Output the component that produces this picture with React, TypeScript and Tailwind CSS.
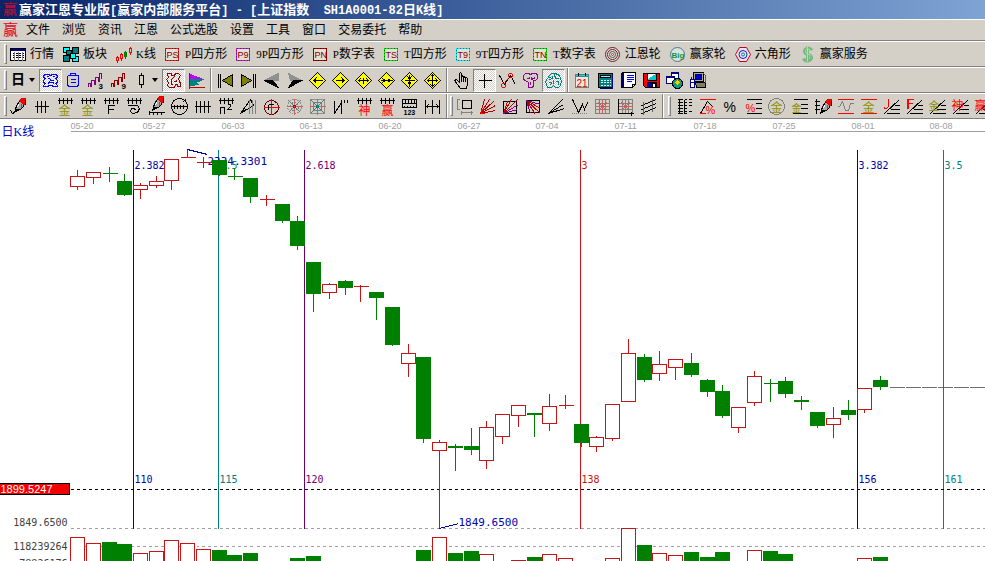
import type { ReactNode } from 'react'
import clsx from 'clsx'

type Tool = { name: string; icon: ReactNode; on?: boolean }

// ---------- small drawing helpers ----------

// integer coordinates land on pixel centres
function Ico({ children, w = 21 }: { children: ReactNode; w?: number }) {
  return (
    <svg width={w} height={20} viewBox={`-0.5 -0.5 ${w} 20`} fill="none" stroke="#000" shapeRendering="crispEdges" aria-hidden="true">
      {children}
    </svg>
  )
}

function Ch({ c, x, y, fill, size = 10, bold = false }: { c: string; x: number; y: number; fill: string; size?: number; bold?: boolean }) {
  return (
    <text x={x} y={y} fill={fill} stroke="none" fontSize={size} fontWeight={bold ? 700 : 400} fontFamily="'Liberation Sans', 'Noto Sans CJK SC', sans-serif">
      {c}
    </text>
  )
}

const Ruler = () => <path d="M3 4H18M5 1V7M9 1V7M13 1V7M17 1V7" />
const Fan = () => <path d="M3 17L18 3M5 17H18M9 13H18M13 9H18" />

const Pen = ({ dx = 0, dy = 0 }: { dx?: number; dy?: number }) => (
  <g transform={`translate(${dx} ${dy})`}>
    <path d="M11 5L8 9L7 13L12 13L15 10L15 6Z" fill="#a8a8a8" />
    <path d="M10 8L9 11" stroke="#fff" />
    <path d="M13 7L13 11" stroke="#606060" />
    <path d="M11 4L13 2H17V8H15Z" fill="#f00" stroke="#e00000" />
    <path d="M17 3V8" />
    <path d="M7 13L6 16L11 13Z" fill="#000" />
  </g>
)

const Diamond = ({ d }: { d: string }) => (
  <Ico>
    <path d="M10 2L18 10L10 18L2 10Z" fill="#ff0" />
    <path d={d} />
  </Ico>
)

const Caret = () => (
  <svg width={7} height={4} viewBox="0 0 7 4" aria-hidden="true"><path d="M0 0H6L3 4Z" /></svg>
)

// ---------- toolbar 1 ----------

const Badge = ({ t, edge, ink = '#800000' }: { t: string; edge: string; ink?: string }) => (
  <Ico w={16}>
    <rect x={0} y={4} width={13} height={12} fill="#e4e0d8" stroke={edge} />
    <rect x={0} y={4} width={13} height={12} stroke="#000" strokeDasharray="1 2" strokeOpacity={0.5} />
    <text x={1} y={13} fill={ink} stroke="none" fontSize={9} fontFamily="'Liberation Sans', sans-serif">{t}</text>
  </Ico>
)

const modules: { latin?: string; text: string; icon: ReactNode }[] = [
  {
    text: '行情',
    icon: (
      <Ico w={16}>
        <rect x={0} y={4} width={15} height={12} fill="#fff" />
        <path d="M0 5H15M0 6H15" stroke="#000080" />
        <path d="M2 9H14M2 11H14M2 13H14" strokeDasharray="2 1" />
        <path d="M4 7V16M8 7V16M12 7V16" stroke="#808080" />
      </Ico>
    ),
  },
  {
    text: '板块',
    icon: (
      <Ico w={16}>
        <rect x={0} y={3} width={6} height={5} fill="#0ff" />
        <rect x={9} y={3} width={6} height={6} fill="#008080" />
        <rect x={0} y={11} width={6} height={6} fill="#008080" />
        <rect x={9} y={12} width={6} height={5} fill="#0ff" />
        <rect x={3} y={6} width={5} height={4} fill="#008080" />
        <rect x={7} y={9} width={5} height={5} fill="#0ff" />
      </Ico>
    ),
  },
  {
    latin: 'K', text: '线',
    icon: (
      <Ico w={16}>
        <path d="M1 11V18M5 8V16M14 2V10" stroke="#f00" />
        <path d="M9 6V14" stroke="#008000" />
        <rect x={0} y={13} width={2} height={3} fill="#d4d0c8" stroke="#f00" />
        <rect x={4} y={10} width={2} height={4} fill="#d4d0c8" stroke="#f00" />
        <rect x={8} y={8} width={2} height={4} fill="#008000" stroke="#008000" />
        <rect x={13} y={4} width={2} height={4} fill="#d4d0c8" stroke="#f00" />
      </Ico>
    ),
  },
  { latin: 'P', text: '四方形', icon: <Badge t="PS" edge="#e02020" /> },
  { latin: '9P', text: '四方形', icon: <Badge t="P9" edge="#c020c0" /> },
  { latin: 'P', text: '数字表', icon: <Badge t="PN" edge="#a00000" /> },
  { latin: 'T', text: '四方形', icon: <Badge t="TS" edge="#00e000" /> },
  { latin: '9T', text: '四方形', icon: <Badge t="T9" edge="#00e8f0" /> },
  { latin: 'T', text: '数字表', icon: <Badge t="TN" edge="#00e000" /> },
  {
    text: '江恩轮',
    icon: (
      <Ico w={16}>
        <g shapeRendering="auto">
          <circle cx={7} cy={10} r={7} fill="#e4e0d8" stroke="#701828" />
          <circle cx={7} cy={10} r={5} stroke="#701828" />
          <circle cx={7} cy={10} r={3} stroke="#306050" />
          <circle cx={7} cy={10} r={1} stroke="#c03030" />
        </g>
      </Ico>
    ),
  },
  {
    text: '赢家轮',
    icon: (
      <Ico w={16}>
        <circle cx={7} cy={10} r={7} stroke="#507890" fill="#d8e4e0" shapeRendering="auto" />
        <text x={1} y={13} fill="#109050" stroke="none" fontSize={8} fontWeight={700} fontFamily="'Liberation Sans', sans-serif">Big</text>
      </Ico>
    ),
  },
  {
    text: '六角形',
    icon: (
      <Ico w={16}>
        <g shapeRendering="auto">
          <path d="M4 3H11L15 10L11 17H4L0 10Z" fill="#e8e4f0" stroke="#c00020" />
          <circle cx={7.5} cy={10} r={4} stroke="#1020c0" />
          <circle cx={7.5} cy={10} r={1.5} stroke="#008080" />
        </g>
      </Ico>
    ),
  },
  {
    text: '赢家服务',
    icon: (
      <Ico w={16}>
        <g shapeRendering="auto">
          <path d="M11 6C10 3 4 3 4 7C4 11 11 9 11 13C11 17 4 17 3 14M7 2V18" stroke="#78b880" strokeWidth={3} />
          <path d="M10 6C9 4 5 4 5 7C5 10 10 9 10 12M7 2V17" stroke="#a8e8a8" strokeWidth={1} />
        </g>
      </Ico>
    ),
  },
]

// ---------- toolbar 2 ----------

const shapes: Tool[] = [
  {
    name: '云图', on: true,
    icon: (
      <Ico>
        <path d="M3 5L5 4H8L10 5L12 4H15L17 5V7L15 8L17 10V12L15 13L17 15V16H13L11 15H9L7 16H3V15L5 13L3 12V10L5 8L3 7Z" stroke="#00f" />
        <path d="M6 6H8M12 6H14M7 8H9L11 10H13M7 12H8L10 10M12 12L14 13M7 14L9 12H11" stroke="#00f" />
      </Ico>
    ),
  },
  {
    name: '剪贴板',
    icon: (
      <Ico>
        <path d="M5 5H15V15L13 16H6L4 15V6Z" stroke="#00f" />
        <path d="M7 5V3H12V5M7 9H12M7 12H12" stroke="#00f" />
      </Ico>
    ),
  },
  {
    name: '波段3',
    icon: (
      <Ico>
        <path d="M2 16V13H4V16H5M5 16V10H8V14H9V7H12V11H13V3H15V8" stroke="#800080" />
        <Ch c="3" x={12} y={18} fill="#000" size={8} bold />
      </Ico>
    ),
  },
  {
    name: '波段9',
    icon: (
      <Ico>
        <path d="M2 16V13H4V16H5M5 16V10H8V14H9V7H12V11H13V3H15V8" stroke="#900000" />
        <Ch c="9" x={12} y={18} fill="#000" size={8} bold />
      </Ico>
    ),
  },
]

const figures: Tool[] = [
  {
    name: '图形', on: true,
    icon: (
      <Ico>
        <path d="M4 3H8V5H11L12 3H15L17 5L15 8L16 11L17 13V16H14V14H12L11 17H6L4 15L5 12L3 9L5 7Z" stroke="#900000" />
        <path d="M8 13V9L10 7M10 11H13V9M7 14H9" stroke="#900000" />
        <path d="M10 5L12 7" stroke="#f00" />
      </Ico>
    ),
  },
  {
    name: '筹码',
    icon: (
      <Ico>
        <path d="M4 4L17 9H4Z" fill="#c000ff" stroke="#c000ff" />
        <path d="M4 9H17L9 12L12 14L4 15Z" fill="#008080" stroke="#008080" />
        <path d="M3 2V18M3 17H18" stroke="#c00000" />
      </Ico>
    ),
  },
]

const moves: Tool[] = [
  { name: '最前', icon: <Ico><path d="M3 3V17M5 3V17" /><path d="M17 4V16L7 10Z" fill="#808000" /></Ico> },
  { name: '最后', icon: <Ico><path d="M17 3V17M15 3V17" /><path d="M3 4V16L13 10Z" fill="#808000" /></Ico> },
  { name: '后退', icon: <Ico><path d="M3 10L17 3V10Z" fill="#909090" stroke="#909090" /><path d="M3 10H11L17 17L13 15Z" fill="#000" /></Ico> },
  { name: '前进', icon: <Ico><path d="M17 10L4 3L6 10Z" fill="#909090" stroke="#909090" /><path d="M17 10H9L4 17L8 15Z" fill="#000" /></Ico> },
  { name: '左移', icon: <Diamond d="M6 10H15M9 7L6 10L9 13M8 8V12" /> },
  { name: '右移', icon: <Diamond d="M5 10H14M11 7L14 10L11 13M12 8V12" /> },
  { name: '横向拉伸', icon: <Diamond d="M5 10H15M7 8L5 10L7 12M13 8L15 10L13 12M10 7V13" /> },
  { name: '横向压缩', icon: <Diamond d="M4 10H16M6 8L9 10L6 12M14 8L11 10L14 12" /> },
  { name: '纵向压缩', icon: <Diamond d="M10 4V16M8 6L10 9L12 6M8 14L10 11L12 14M5 10H15" /> },
  { name: '纵向拉伸', icon: <Diamond d="M10 4V16M8 6L10 4L12 6M8 14L10 16L12 14M5 10H15M7 8L5 10L7 12M13 8L15 10L13 12" /> },
]

const pointers: Tool[] = [
  {
    name: '手形',
    icon: <Ico><path d="M8 12L5 9L3 10L6 14L9 18H15L16 14V8L15 7L14 8V11M14 8L13 6L12 7V11M12 7L11 5L10 6V11M10 6V3L9 2L8 3V12" /></Ico>,
  },
  { name: '十字光标', on: true, icon: <Ico><path d="M10 3V17M4 10H17" /></Ico> },
  {
    name: '连线',
    icon: <Ico><path d="M2 5L7 14L13 5L18 14" /><circle cx={6} cy={15} r={2} stroke="#f00" /><circle cx={13} cy={5} r={2} stroke="#f00" /><path d="M7 12L12 7" stroke="#800000" /></Ico>,
  },
  {
    name: '树形',
    icon: <Ico><path d="M5 3H8L10 4L12 3H16L17 5V8L15 10H13V15L12 17H8V12L5 10L3 9V5Z" stroke="#900090" /><path d="M6 8H9V6M11 6V9L15 7M10 11V14" stroke="#900090" /></Ico>,
  },
  {
    name: '智能', on: true,
    icon: <Ico><path d="M6 5L8 3H12L14 4L16 5L17 8L18 11L17 15L15 17H12L10 15L8 17H4L3 14L2 11L4 8Z" stroke="#008080" /><path d="M9 5V8L6 9M11 4L12 8H15M5 12H8L7 15M10 9V13M12 11H15V14M5 7H7" stroke="#008080" /></Ico>,
  },
]

const utils: Tool[] = [
  {
    name: '日历',
    icon: <Ico><rect x={3} y={4} width={13} height={13} fill="#f0e8e0" stroke="#708080" /><path d="M3 4H16V6H3Z" fill="#40c0c0" stroke="#309090" /><path d="M6 2V5M13 2V5" /><Ch c="21" x={4} y={16} fill="#e00000" size={10} /></Ico>,
  },
  {
    name: '计算器',
    icon: <Ico><rect x={3} y={3} width={14} height={14} fill="#008080" /><rect x={5} y={5} width={10} height={2} fill="#b0e8e8" /><path d="M5 10H15M5 12H15M5 15H15" stroke="#e0ffff" strokeDasharray="2 1" strokeWidth={1} /><path d="M17 4V18H4" stroke="#000080" /></Ico>,
  },
  {
    name: '记事本',
    icon: <Ico><path d="M4 2H17V14L14 17H4Z" fill="#fff" /><path d="M4 2V17" stroke="#000060" strokeWidth={3} /><path d="M8 5H15M8 7H15M8 9H15M8 11H13" stroke="#00f" /><path d="M17 14H14V17" /></Ico>,
  },
  {
    name: '保存',
    icon: <Ico><path d="M2 3H18V17H4L2 15Z" fill="#f00" /><rect x={6} y={3} width={9} height={7} fill="#fff" /><path d="M7 9L14 4V9Z" fill="#0cc" stroke="#0cc" /><rect x={6} y={12} width={9} height={5} fill="#0000c0" /><rect x={11} y={13} width={3} height={4} fill="#fff" /></Ico>,
  },
  {
    name: '网络',
    icon: <Ico><rect x={7} y={2} width={7} height={7} fill="#fff" stroke="#000080" /><path d="M7 3H14" stroke="#000080" /><rect x={2} y={6} width={8} height={7} fill="#fff" stroke="#000080" /><path d="M2 7H10" stroke="#000080" /><circle cx={13} cy={13} r={5} fill="#00a0a0" /><path d="M10 12L13 9L16 12L13 15Z" fill="#e0e000" stroke="#808000" /></Ico>,
  },
  {
    name: '远程',
    icon: <Ico><rect x={6} y={2} width={10} height={9} fill="#b0ac98" /><rect x={8} y={4} width={6} height={5} fill="#0000c0" stroke="#000080" /><path d="M8 12H18V17H9Z" fill="#808060" /><path d="M16 3L18 5V12" stroke="#606040" /><rect x={3} y={9} width={4} height={8} fill="#fff" stroke="#000080" /><path d="M4 6V9M3 12H7" stroke="#0000c0" /></Ico>,
  },
]

// ---------- toolbar 3 ----------

const lines: Tool[] = [
  { name: '画笔', icon: <Ico><Pen /><path d="M2 14L4 17L6 16" /></Ico> },
  { name: '等分线', icon: <Ico><path d="M3 10H17M6 4V16M10 4V16M14 4V16" /></Ico> },
  { name: '黄金分割', icon: <Ico><Ruler /><Ch c="金" x={4} y={18} fill="#909000" size={12} /></Ico> },
  { name: '黄金周期', icon: <Ico><Ruler /><Ch c="金" x={4} y={18} fill="#909000" size={12} /></Ico> },
  { name: '斐波那契', icon: <Ico><Ruler /><path d="M8 17V9H14M8 13H13" /></Ico> },
  { name: '螺旋', icon: <Ico><Ruler /><path d="M4 9H14L16 12L14 16L9 17L7 15L8 12H11L12 14" /></Ico> },
  { name: '标尺笔', icon: <Ico><Pen dy={-2} /><path d="M2 16H18M3 14V18M7 15V18M11 15V18M15 15V18" /></Ico> },
  { name: '圆周', icon: <Ico><circle cx={10} cy={10} r={8} /><path d="M2 10H18M5 8V12M8 8V12M11 8V12M14 8V12M13 6L16 3" /></Ico> },
  { name: '周期线', icon: <Ico><path d="M2 10H18M4 4V16M8 4V16M12 4V16M16 4V16" /></Ico> },
  { name: '平方', icon: <Ico><Ruler /><path d="M5 17V10M5 11H9V17M12 9L13 8H15V10L12 13H16" /></Ico> },
  { name: '三角', icon: <Ico><path d="M2 17L12 3L15 9L2 17L8 12" /><path d="M11 3V17M14 3V17M17 3V17" stroke="#808080" /></Ico> },
  { name: '定位圆', icon: <Ico><circle cx={10} cy={11} r={7} stroke="#600000" /><path d="M10 2V18M2 11H18" stroke="#f00" /><path d="M7 8H12M7 8V13" /></Ico> },
  { name: '射线圆', icon: <Ico><circle cx={10} cy={10} r={7} stroke="#909090" strokeDasharray="2 1" /><circle cx={10} cy={10} r={4} stroke="#509090" strokeDasharray="2 1" /><path d="M10 2V18M2 10H18" stroke="#d06060" /><path d="M4 4L16 16M16 4L4 16" stroke="#608080" /><path d="M9 9H11V11H9Z" stroke="#c00" /></Ico> },
  { name: '射线方', icon: <Ico><rect x={3} y={3} width={14} height={14} stroke="#909090" /><rect x={6} y={6} width={8} height={8} stroke="#509090" /><path d="M10 2V18M2 10H18" stroke="#d06060" /><path d="M3 3L17 17M17 3L3 17" stroke="#707070" /><path d="M9 9H11V11H9Z" stroke="#008080" /></Ico> },
  { name: '波浪', icon: <Ico><path d="M4 4V17L11 6V17M11 6V3M14 3V6M17 3V6" /></Ico> },
  { name: '神奇数', icon: <Ico><Ruler /><Ch c="神" x={5} y={18} fill="#f00" size={12} /></Ico> },
  { name: '赢家数', icon: <Ico><Ruler /><Ch c="赢" x={5} y={18} fill="#f00" size={12} /></Ico> },
  { name: '刻度', icon: <Ico><path d="M3 3H17V11H3ZM3 7H17M6 3V7M9 3V7M12 3V7M15 3V7M5 9V11M8 9V11M11 9V11M14 9V11" /><Ch c="123" x={4} y={18} fill="#000" size={7} bold /></Ico> },
  { name: '区间', icon: <Ico><path d="M3 3V17M17 3V17M10 3V17M3 10H17M6 8L4 10L6 12M14 8L16 10L14 12" /></Ico> },
]

const fans: Tool[] = [
  { name: '矩形', icon: <Ico><rect x={8} y={4} width={9} height={8} /><path d="M3 3V13M2 3H5M2 13H5M7 16H18M7 14V18M17 14V18" stroke="#808080" /></Ico> },
  { name: '角度线', icon: <Ico><path d="M3 17L7 3M3 17L12 3M3 17L17 4M3 17L18 9M3 17L18 14" stroke="#b00000" /><path d="M3 17L5 13M3 17H7" stroke="#f00" /></Ico> },
  { name: '角度框', icon: <Ico><rect x={3} y={5} width={13} height={12} /><path d="M3 17L7 5M3 17L11 3M3 17L17 3" stroke="#c00000" /><path d="M3 17L18 8M3 17L17 13" stroke="#800080" /></Ico> },
  { name: '反角度框', icon: <Ico><rect x={3} y={4} width={13} height={12} /><path d="M3 4L17 17M3 4L17 12M3 4L12 18" stroke="#c00000" /><path d="M3 4L17 8M3 4L7 17" stroke="#800080" /></Ico> },
  { name: '速阻线', icon: <Ico><path d="M2 17L16 3M2 17L17 8M2 17L18 12M2 17L6 15" /></Ico> },
  { name: '折线', icon: <Ico><path d="M3 3L9 16L13 8L15 13L18 6" /><path d="M2 17H18" stroke="#808080" strokeDasharray="1 1" /></Ico> },
  { name: '网格', icon: <Ico><path d="M3 3H17V17H3ZM3 7H17M3 13H17M7 3V17M13 3V17" stroke="#808080" /><path d="M10 3V17M3 10H17M6 6L14 14M14 6L6 14" stroke="#d06060" /></Ico> },
  { name: '坐标网格', icon: <Ico><path d="M3 3H17V17M7 3V17M13 3V17M3 7H17M3 13H17" stroke="#808080" /><path d="M10 3V17M3 10H17M6 6L14 14M14 6L6 14" stroke="#d06060" /><path d="M3 2V17H18M16 15V19" /></Ico> },
  { name: '平行线', icon: <Ico><path d="M3 9L18 3M3 13L18 7M3 17L18 11" /><path d="M5 5V18M14 2V15" stroke="#606060" /></Ico> },
]

const levels: Tool[] = [
  { name: '阶梯', icon: <Ico><path d="M5 3V17M10 3V17M3 3H8M3 6H8M3 9H8M3 12H8M3 15H8M3 17H8M10 3H12M10 6H12M10 9H12M10 12H12M10 15H12M10 17H12M14 3H17M14 6H17M14 9H17M14 15H17" /></Ico> },
  { name: '百分比', icon: <Ico><path d="M3 17L10 5L16 11" /><path d="M2 3H18M2 17H8" stroke="#f00" /><Ch c="%" x={8} y={17} fill="#f00" size={11} /></Ico> },
  { name: '百分号', icon: <Ico><Ch c="%" x={3} y={15} fill="#000" size={14} /></Ico> },
  { name: '百分线', icon: <Ico><path d="M3 3H18M12 7H18M12 12H18M3 17H18" /><Ch c="%" x={2} y={15} fill="#f00" size={11} /></Ico> },
  { name: '金圈', icon: <Ico><circle cx={10} cy={10} r={8} stroke="#808080" /><Ch c="金" x={4} y={15} fill="#909000" size={12} /></Ico> },
  { name: '金线', icon: <Ico><path d="M4 3H18M11 8H18M11 12H18M3 17H18" /><Ch c="金" x={2} y={15} fill="#909000" size={10} /></Ico> },
  { name: '标注笔', icon: <Ico><Pen dx={2} dy={1} /><path d="M4 2V17M2 5H7M2 9H7M2 13H7" /></Ico> },
  { name: '通道波', icon: <Ico><path d="M2 10H4L7 5L10 14L13 14L15 7L18 7" stroke="#808080" /><path d="M2 3H18M2 17H18" stroke="#f00" /></Ico> },
  { name: '金通道', icon: <Ico><Ch c="金" x={4} y={15} fill="#909000" size={12} /><path d="M2 3H18M2 17H18" stroke="#f00" /></Ico> },
  { name: 'J线', icon: <Ico><Fan /><path d="M7 2V10L5 12H3V10" stroke="#f00" /></Ico> },
  { name: 'F线', icon: <Ico><Fan /><path d="M3 12V3H9M3 7H8M4 12V3" stroke="#f00" /></Ico> },
  { name: '金角', icon: <Ico><Fan /><Ch c="金" x={1} y={13} fill="#909000" size={11} /></Ico> },
  { name: '神角', icon: <Ico><Fan /><Ch c="神" x={1} y={13} fill="#f00" size={12} /></Ico> },
  { name: '赢角', icon: <Ico><Fan /><Ch c="赢" x={1} y={13} fill="#f00" size={12} /></Ico> },
]

// ---------- chrome ----------

const DITHER = 'bg-[repeating-conic-gradient(#fff_0_25%,#d4d0c8_0_50%)] bg-[length:2px_2px]'

function Btn({ tool }: { tool: Tool }) {
  return (
    <button
      type="button"
      title={tool.name}
      aria-label={tool.name}
      className={clsx(
        'flex h-[23px] w-[23px] shrink-0 items-center justify-center border',
        tool.on ? `border-[#808080] border-r-white border-b-white ${DITHER}` : 'border-transparent',
      )}
    >
      {tool.icon}
    </button>
  )
}

const Group = ({ tools }: { tools: Tool[] }) => <>{tools.map(t => <Btn key={t.name} tool={t} />)}</>

const Grip = () => <span className="h-5 w-[3px] shrink-0 border border-t-white border-r-[#808080] border-b-[#808080] border-l-white" />
const Split = () => <span className="mx-[2px] h-full w-[2px] shrink-0 border-l border-[#808080] bg-white" />

const bar = 'flex h-[26px] shrink-0 items-center overflow-hidden border-t border-b border-t-white border-b-[#808080] pl-1'

const menus = ['文件', '浏览', '资讯', '江恩', '公式选股', '设置', '工具', '窗口', '交易委托', '帮助']

// ---------- chart ----------

const TOP = 119
const RED = '#c81414'
const GREEN = '#008000'
const BLUE = '#0000b0'

// [rising, high, body top, body bottom, low, volume top]
const candles: [boolean, number, number, number, number, number][] = [
  [true, 169, 176, 186, 189, 537],
  [true, 172, 172, 177, 183, 543],
  [false, 166, 173, 173, 181, 542],
  [false, 173, 181, 194, 195, 544],
  [true, 182, 185, 189, 198, 553],
  [true, 175, 181, 185, 187, 551],
  [true, 159, 159, 180, 189, 540],
  [true, 149, 157, 157, 157, 543],
  [true, 156, 162, 162, 167, 549],
  [false, 160, 160, 174, 175, 550],
  [false, 167, 176, 176, 179, 555],
  [false, 178, 178, 196, 202, 553],
  [true, 194, 199, 199, 205, 570],
  [false, 203, 204, 220, 222, 570],
  [false, 215, 221, 245, 249, 558],
  [false, 262, 262, 293, 311, 556],
  [true, 282, 284, 292, 298, 570],
  [false, 279, 281, 287, 294, 570],
  [true, 284, 286, 286, 301, 570],
  [false, 292, 292, 297, 319, 570],
  [false, 307, 307, 344, 345, 570],
  [true, 343, 353, 363, 376, 570],
  [false, 357, 357, 438, 442, 550],
  [true, 439, 442, 450, 528, 537],
  [false, 443, 446, 447, 470, 553],
  [false, 427, 446, 449, 454, 551],
  [true, 420, 427, 460, 468, 554],
  [true, 414, 414, 436, 443, 570],
  [true, 404, 405, 415, 426, 560],
  [false, 413, 413, 414, 436, 557],
  [true, 393, 406, 423, 430, 554],
  [true, 394, 405, 405, 408, 558],
  [false, 424, 424, 442, 446, 570],
  [true, 435, 437, 446, 451, 570],
  [true, 403, 404, 438, 440, 558],
  [true, 338, 353, 401, 401, 528],
  [false, 353, 357, 379, 381, 545],
  [true, 350, 364, 373, 380, 553],
  [true, 359, 359, 367, 379, 555],
  [false, 352, 363, 374, 376, 552],
  [false, 378, 380, 391, 396, 557],
  [false, 384, 391, 415, 417, 552],
  [true, 406, 407, 427, 432, 570],
  [true, 370, 376, 402, 405, 550],
  [false, 378, 383, 383, 401, 551],
  [false, 376, 381, 393, 397, 554],
  [false, 395, 400, 401, 409, 570],
  [false, 412, 412, 425, 427, 570],
  [true, 406, 418, 424, 437, 570],
  [false, 399, 410, 414, 419, 570],
  [true, 387, 388, 409, 412, 558],
  [false, 375, 380, 386, 389, 557],
]

const cycles = [
  { x: 133, color: BLUE, top: '2.382', bottom: '110' },
  { x: 218, color: '#008080', top: '2.5', bottom: '115' },
  { x: 304, color: '#700070', top: '2.618', bottom: '120' },
  { x: 580, color: '#c81414', top: '3', bottom: '138' },
  { x: 857, color: BLUE, top: '3.382', bottom: '156' },
  { x: 943, color: '#008080', top: '3.5', bottom: '161' },
]

const dates: [number, string][] = [
  [70, '05-20'], [142, '05-27'], [221, '06-03'], [299, '06-13'], [378, '06-20'], [457, '06-27'],
  [535, '07-04'], [614, '07-11'], [693, '07-18'], [772, '07-25'], [851, '08-01'], [929, '08-08'],
]

const slot = (i: number) => Math.floor(70.55 + 15.74 * i)

function Candle({ i }: { i: number }) {
  const [up, high, top, bottom, low, vol] = candles[i]
  const x = slot(i)
  const color = up ? RED : GREEN
  const fill = up ? '#fff' : GREEN
  return (
    <g stroke={color}>
      <path d={`M${x + 7} ${high}V${low}`} />
      {top === bottom
        ? <path d={`M${x} ${top}H${x + 15}`} />
        : <rect x={x} y={top} width={14} height={bottom - top} fill={fill} />}
      <rect x={x} y={vol} width={14} height={60} fill={fill} />
    </g>
  )
}

function Chart() {
  return (
    <svg className="h-full w-full" role="img" aria-label="上证指数 日K线" shapeRendering="crispEdges" fontFamily="'DejaVu Sans Mono', monospace">
      <g transform={`translate(0.5 ${0.5 - TOP})`} fill="none">
        <text x={1} y={135} fill="#0000c0" fontSize={12} fontFamily="'Liberation Serif', 'Noto Sans CJK SC', sans-serif">日K线</text>
        {dates.map(([x, d]) => (
          <text key={d} x={x} y={128} fill="#a0a0a0" fontSize={9} fontFamily="'Liberation Sans', sans-serif">{d}</text>
        ))}
        <line x1={70} x2="100%" y1={131} y2={131} stroke="#a0a0a0" />

        <line x1={70} x2="100%" y1={528} y2={528} stroke="#a0a0a0" strokeDasharray="3 3" />
        <line x1={70} x2="100%" y1={546} y2={546} stroke="#a0a0a0" strokeDasharray="3 3" />
        <line x1={889} x2="100%" y1={387} y2={387} stroke="#707070" strokeDasharray="15 1" />

        {cycles.map(c => (
          <g key={c.x} fill={c.color} fontSize={10}>
            <path d={`M${c.x} 149V528`} stroke={c.color} />
            <text x={c.x + 1} y={168}>{c.top}</text>
            <text x={c.x + 1} y={482}>{c.bottom}</text>
          </g>
        ))}
        <line x1={70} x2="100%" y1={489} y2={489} stroke="#000" strokeDasharray="3 3" />

        <text x={207} y={164} fill={BLUE} fontSize={11}>2334.3301</text>
        {candles.map((_, i) => <Candle key={i} i={i} />)}
        <path d="M187 149L207 154M439 528L458 523" stroke={BLUE} />
        <text x={458} y={525} fill={BLUE} fontSize={11}>1849.6500</text>

        <g fill="#404040" fontSize={10} textAnchor="end">
          <text x={67} y={525}>1849.6500</text>
          <text x={67} y={549}>118239264</text>
          <text x={67} y={566}>78826176</text>
        </g>
        <rect x={-1} y={483} width={70} height={11} fill="#f00000" stroke="#000" />
        <text x={0} y={492} fill="#fff" fontSize={11} fontFamily="'Liberation Sans', sans-serif">1899.5247</text>
      </g>
    </svg>
  )
}

const Mono = ({ children }: { children: string }) => (
  <span className="font-['Liberation_Mono',monospace] text-[12px]">{children}</span>
)

export default function App() {
  return (
    <div className="flex h-screen flex-col overflow-hidden bg-[#d4d0c8] font-['Liberation_Serif','Noto_Sans_CJK_SC',sans-serif] text-[12px] text-black">
      <header className="flex h-[19px] shrink-0 items-center overflow-hidden bg-linear-to-r from-[#0a246a] to-[#7fa3d3] pl-[3px]">
        <span className="w-4 text-[14px] leading-none text-[#c01030]">赢</span>
        <h1 className="text-[13px] leading-none font-bold whitespace-pre text-white">
          赢家江恩专业版<Mono>[</Mono>赢家内部服务平台<Mono>{'] - ['}</Mono>上证指数<Mono>{'  SH1A0001-82'}</Mono>日<Mono>K</Mono>线<Mono>]</Mono>
        </h1>
      </header>

      <nav className="flex h-[22px] shrink-0 items-center gap-3 border-t border-b border-t-white border-b-[#808080] pl-[3px]">
        <span className="-mr-1 w-[15px] text-[15px] leading-none text-[#e00020]">赢</span>
        {menus.map(m => <button key={m} type="button" className="leading-none whitespace-nowrap">{m}</button>)}
      </nav>

      <div className={bar}>
        <Grip />
        <div className="flex gap-[9px] pl-[3px]">
          {modules.map(m => (
            <button key={(m.latin ?? '') + m.text} type="button" className="flex shrink-0 items-center gap-1 leading-none whitespace-nowrap">
              {m.icon}
              <span>{m.latin && <span className="text-[11px]">{m.latin}</span>}{m.text}</span>
            </button>
          ))}
        </div>
      </div>

      <div className={bar}>
        <Grip />
        <button type="button" aria-label="周期" className="flex h-[23px] w-8 shrink-0 items-center justify-between pr-[3px] pl-1 text-[14px] leading-none font-bold">
          日<Caret />
        </button>
        <Group tools={shapes} />
        <button type="button" aria-label="K线样式" className="flex h-[23px] w-[31px] shrink-0 items-center">
          <Ico><path d="M10 2V5M10 14V17" /><rect x={8} y={5} width={4} height={9} /></Ico>
          <Caret />
        </button>
        <Group tools={figures} />
        <Split />
        <Group tools={moves} />
        <Split />
        <Group tools={pointers} />
        <Split />
        <Group tools={utils} />
      </div>

      <div className={bar}>
        <Grip />
        <Group tools={lines} />
        <Split />
        <Grip />
        <Group tools={fans} />
        <Split />
        <span className="flex h-full shrink-0 items-center px-[2px]"><Grip /></span>
        <Group tools={levels} />
      </div>

      <main className="min-h-0 flex-1 overflow-hidden bg-white">
        <Chart />
      </main>
    </div>
  )
}
